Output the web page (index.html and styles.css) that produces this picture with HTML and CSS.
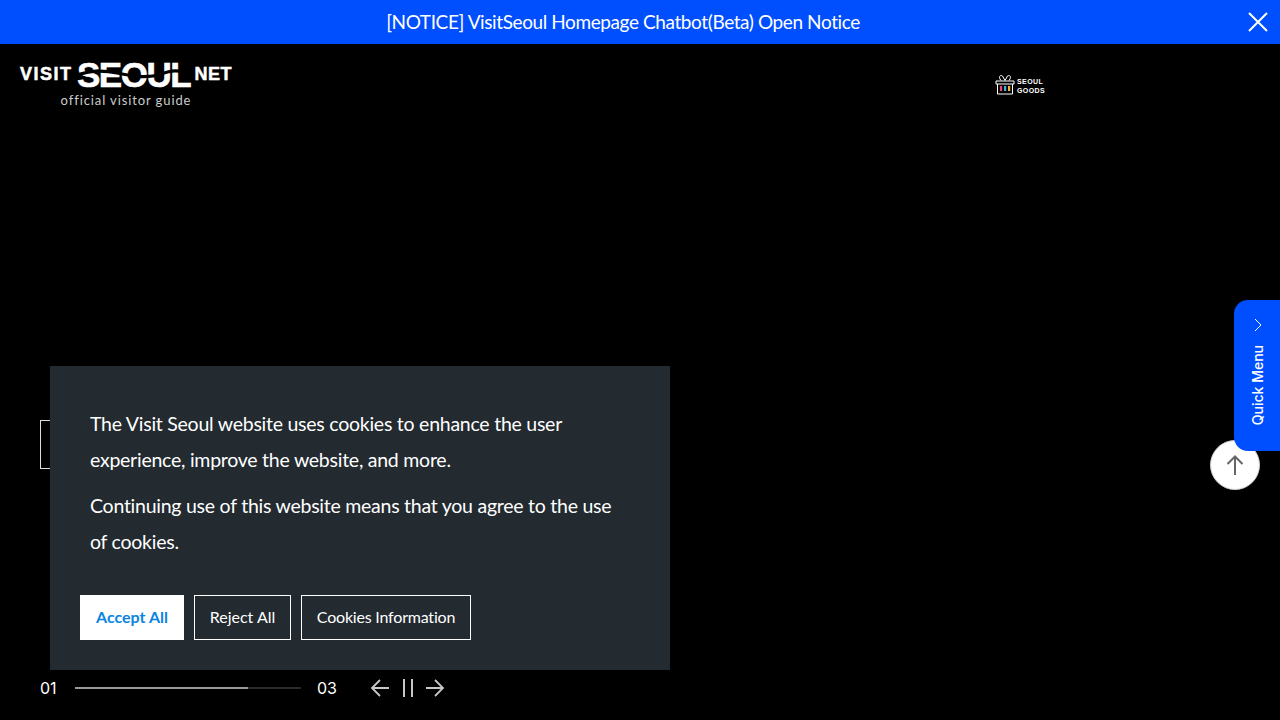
FILE: index.html
```html
<!DOCTYPE html>
<html lang="en">
<head>
  <meta charset="UTF-8" />
  <title>Visit Seoul</title>
  <link rel="stylesheet" href="styles.css">
</head>
<body>
  <div class="notice">
    <a class="notice-link" href="#">[NOTICE] VisitSeoul Homepage Chatbot(Beta) Open Notice</a>
    <button class="notice-close" aria-label="Close">
      <svg width="20" height="20" viewBox="0 0 20 20"><path d="M1 1L19 19M19 1L1 19" stroke="#fff" stroke-width="2" fill="none"/></svg>
    </button>
  </div>

  <header class="header">
    <a class="logo" href="#">
      <div class="logo-top">
        <span class="logo-small logo-visit">VISIT</span>
        <span class="logo-big">SEOUL
          <svg class="logo-wave" width="116" height="12" viewBox="0 0 116 12"><path d="M0 8C14 2 28 2 42 5S72 11 86 6S104 3 116 5" stroke="#000" stroke-width="3.200" fill="none"/></svg>
        </span>
        <span class="logo-small">NET</span>
      </div>
      <div class="logo-sub">official visitor guide</div>
    </a>
    <a class="goods" href="#">
      <svg width="20" height="21" viewBox="0 0 20 21">
        <path d="M1 7H19V10H1ZM2.500 10V20H17.500V10M6 6.500C3 3 5 0.500 7.500 2L10 6.500L12.500 2C15 0.500 17 3 14 6.500" stroke="#fff" stroke-width="1" fill="none"/>
        <rect x="5" y="12" width="2.200" height="5" fill="#f0447a"/>
        <rect x="9" y="12" width="2.200" height="5" fill="#35b8e8"/>
        <rect x="13" y="12" width="2.200" height="5" fill="#f5b52e"/>
      </svg>
      <span class="goods-text">SEOUL<br>GOODS</span>
    </a>
  </header>

  <main class="hero">
    <div class="hero-box"></div>

    <div class="slider-bar">
      <span class="slide-num">01</span>
      <div class="progress"><div class="progress-fill" style="width:76.500%"></div></div>
      <span class="slide-num">03</span>
      <div class="slider-btns">
        <svg width="20" height="20" viewBox="0 0 20 20"><path d="M19 10H2M10 2L2 10L10 18" stroke="#c8c8c8" stroke-width="1.800" fill="none"/></svg>
        <svg class="pause" width="12" height="18" viewBox="0 0 12 18"><path d="M2 0V18M10 0V18" stroke="#c8c8c8" stroke-width="2" fill="none"/></svg>
        <svg width="20" height="20" viewBox="0 0 20 20"><path d="M1 10H18M10 2L18 10L10 18" stroke="#c8c8c8" stroke-width="1.800" fill="none"/></svg>
      </div>
    </div>

    <div class="cookie">
      <p>The Visit Seoul website uses cookies to enhance the user experience, improve the website, and more.</p>
      <p>Continuing use of this website means that you agree to the use of cookies.</p>
      <div class="cookie-btns">
        <button class="btn btn-accept">Accept All</button>
        <button class="btn btn-reject">Reject All</button>
        <button class="btn btn-info">Cookies Information</button>
      </div>
    </div>

    <button class="to-top" aria-label="Top">
      <svg width="18" height="20" viewBox="0 0 18 20"><path d="M9 20V2M1.500 9L9 1.500L16.500 9" stroke="#666" stroke-width="2" fill="none"/></svg>
    </button>

    <div class="quick">
      <svg class="quick-arrow" width="10" height="14" viewBox="0 0 10 14"><path d="M2 1L8 7L2 13" stroke="#fff" stroke-width="1" fill="none"/></svg>
      <span class="quick-text">Quick Menu</span>
    </div>
  </main>
</body>
</html>
```

FILE: styles.css
```css
* { box-sizing: border-box; }
html, body { height: 100%; }
body {
  margin: 0;
  height: 720px;
  overflow: hidden;
  background: #000;
  color: #fff;
  font-family: 'Lato', sans-serif;
  display: flex;
  flex-direction: column;
}
button { font-family: inherit; cursor: pointer; }
a { color: inherit; text-decoration: none; }

.notice {
  position: relative;
  height: 44px;
  flex-shrink: 0;
  background: #004fff;
  display: flex;
  align-items: center;
  justify-content: center;
  padding: 0 34px 2px 0;
  font-size: 19px;
  letter-spacing: -0.4px;
}
.notice-close {
  position: absolute;
  right: 12px;
  top: 12px;
  width: 20px;
  height: 20px;
  padding: 0;
  border: none;
  background: none;
  display: flex;
}

.header {
  height: 74px;
  flex-shrink: 0;
  position: relative;
  padding: 17px 0 0 20px;
}
.logo { display: block; width: 212px; }
.logo-top {
  display: flex;
  align-items: center;
  justify-content: space-between;
  height: 26px;
}
.logo-small {
  font-family: 'Liberation Sans', sans-serif;
  font-weight: 700;
  font-size: 18px;
  letter-spacing: 0.5px;
  -webkit-text-stroke: 0.5px #fff;
}
.logo-visit { letter-spacing: 1.500px; }
.logo-big {
  position: relative;
  top: 1px;
  font-family: 'Liberation Sans', sans-serif;
  font-weight: 700;
  font-size: 35px;
  line-height: 26px;
  letter-spacing: -1.500px;
  -webkit-text-stroke: 0.6px #fff;
}
.logo-wave {
  position: absolute;
  left: -2px;
  top: 6px;
}
.logo-sub {
  text-align: center;
  font-size: 13px;
  letter-spacing: 0.900px;
  color: #ccc;
  margin-top: 5px;
}
.goods {
  position: absolute;
  left: 995px;
  top: 30px;
  display: flex;
  align-items: center;
  gap: 2px;
}
.goods-text {
  font-family: 'Liberation Sans', sans-serif;
  font-size: 7px;
  font-weight: 700;
  line-height: 9px;
  letter-spacing: 0.4px;
  padding-top: 2px;
}

.hero {
  flex: 1;
  position: relative;
}
.hero-box {
  position: absolute;
  left: 40px;
  top: 302px;
  width: 200px;
  height: 49px;
  border: 1px solid #ddd;
}
.cookie {
  position: absolute;
  left: 50px;
  top: 248px;
  width: 620px;
  height: 304px;
  background: #232a30;
  padding: 40px 50px 30px 40px;
  font-size: 19.500px;
  letter-spacing: -0.25px;
  line-height: 36px;
}
.cookie p { margin: 0 0 10px; }
.cookie-btns {
  display: flex;
  gap: 10px;
  margin: 35px 0 0 -10px;
  letter-spacing: 0;
}
.btn {
  height: 45px;
  padding: 0 0 2px;
  border: 1px solid #fff;
  background: transparent;
  color: #fff;
  font-size: 16px;
}
.btn-accept {
  width: 104px;
  background: #fff;
  color: #0a84e0;
  font-weight: 700;
}
.btn-reject { width: 97px; }
.btn-info { width: 170px; letter-spacing: -0.2px; }

.slider-bar {
  position: absolute;
  left: 40px;
  bottom: 22px;
  display: flex;
  align-items: center;
  height: 20px;
}
.slide-num {
  font-family: 'Inter', sans-serif;
  font-size: 16px;
  color: #fff;
  width: 35px;
}
.progress {
  width: 226px;
  height: 2px;
  margin-right: 16px;
  background: #2a2a2a;
}
.progress-fill { height: 100%; background: #9a9a9a; }
.slider-btns {
  display: flex;
  align-items: center;
  gap: 11px;
  margin-left: 18px;
}
.slider-btns .pause { margin-left: 1px; }

.to-top {
  position: absolute;
  left: 1210px;
  top: 322px;
  width: 50px;
  height: 50px;
  border-radius: 50%;
  border: 1px solid #ccc;
  background: #fff;
  display: flex;
  align-items: center;
  justify-content: center;
  padding: 0;
}
.quick {
  position: absolute;
  left: 1234px;
  top: 182px;
  width: 46px;
  height: 151px;
  background: #004fff;
  border-radius: 14px 0 0 14px;
  display: flex;
  flex-direction: column;
  align-items: center;
  gap: 13px;
  padding-top: 18px;
}
.quick-arrow { margin-left: 2px; }
.quick-text {
  writing-mode: vertical-rl;
  transform: rotate(180deg);
  font-family: 'Inter', sans-serif;
  font-size: 14px;
  font-weight: 500;
}
```
